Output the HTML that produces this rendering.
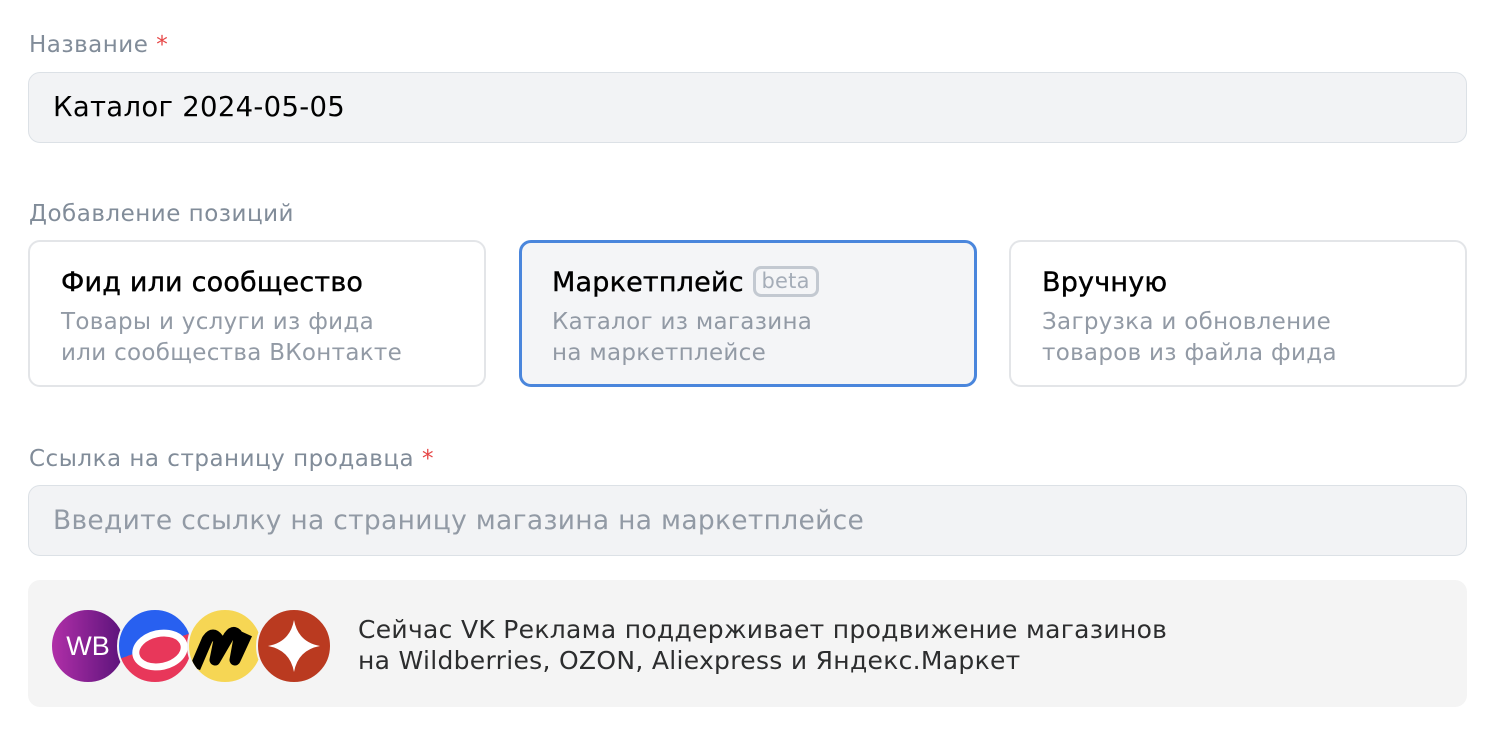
<!DOCTYPE html><html><head><meta charset="utf-8"><style>
body{margin:0;width:1504px;height:742px;background:#fff;font-family:"DejaVu Sans",sans-serif;position:relative;overflow:hidden}
.a{position:absolute}
.lbl{font-size:23px;color:#818c99;letter-spacing:0.5px}
.lbl b{color:#e64646;font-weight:normal}
.inp{left:28px;width:1439px;height:71px;background:#f2f3f5;border:1px solid #dce1e6;border-radius:12px;box-sizing:border-box;line-height:69px;padding-left:24px;letter-spacing:0.3px}
.card{top:240px;width:458px;height:147px;border:2px solid #e3e5e8;border-radius:12px;box-sizing:border-box;padding:21px 0 0 31px}
.card .t{font-size:27px;color:#000;height:40px;line-height:40px;letter-spacing:0.2px;-webkit-text-stroke:0.4px #000}
.card .s{font-size:23px;color:#929aa5;line-height:31px;margin-top:4px;letter-spacing:0.3px}
.c{border-radius:50%;width:72px;height:72px;top:608px;position:absolute;border:2px solid #f4f4f4;box-sizing:content-box}
</style></head><body>
<div class="a lbl" style="left:29px;top:32px">Название <b>*</b></div>
<div class="a inp" style="top:72px;color:#000;font-size:27.5px">Каталог 2024-05-05</div>
<div class="a lbl" style="left:29px;top:201px">Добавление позиций</div>
<div class="a card" style="left:28px"><div class="t">Фид или сообщество</div><div class="s">Товары и услуги из фида<br>или сообщества ВКонтакте</div></div>
<div class="a card" style="left:519px;border:3px solid #4a86dc;background:#f4f5f7;padding:20px 0 0 30px"><div class="t">Маркетплейс <span style="display:inline-block;font-size:21px;color:#a5adb8;border:3px solid #c3c9d1;border-radius:8px;line-height:25px;padding:0 6px;vertical-align:3px;-webkit-text-stroke:0">beta</span></div><div class="s">Каталог из магазина<br>на маркетплейсе</div></div>
<div class="a card" style="left:1009px"><div class="t">Вручную</div><div class="s">Загрузка и обновление<br>товаров из файла фида</div></div>
<div class="a lbl" style="left:29px;top:446px">Ссылка на страницу продавца <b>*</b></div>
<div class="a inp" style="top:485px;color:#929aa5;font-size:26.5px">Введите ссылку на страницу магазина на маркетплейсе</div>
<div class="a" style="left:28px;top:580px;width:1439px;height:127px;background:#f4f4f4;border-radius:12px"></div>
<div class="c" style="left:50px;background:linear-gradient(90deg,#b02fa8,#5a137a);color:#fff;font-size:27px;line-height:72px;text-align:center;font-family:'Liberation Sans',sans-serif">WB</div>
<div class="c" style="left:117px;background:linear-gradient(160deg,#2860f0 50%,#e8375a 50%)"><div style="position:absolute;left:13px;top:20px;width:42px;height:26px;border:7px solid #fff;border-radius:50%;background:#e8375a;transform:rotate(-12deg)"></div></div>
<div class="c" style="left:187px;background:#f6d654;overflow:hidden"><svg width="72" height="72"><path d="M6 58 L18 30 Q24 20 30 30 L26 50 L40 26 Q46 18 50 28 L46 50 L58 24" fill="none" stroke="#000" stroke-width="11" stroke-linejoin="round"/></svg></div>
<div class="c" style="left:256px;background:#ba3a20"><svg width="72" height="72"><path d="M36 10 Q40 32 62 36 Q40 40 36 62 Q32 40 10 36 Q32 32 36 10Z" fill="#fff"/></svg></div>
<div class="a" style="left:358px;top:614px;font-size:25px;line-height:31px;color:#2c2d2e;letter-spacing:0.3px">Сейчас VK Реклама поддерживает продвижение магазинов<br>на Wildberries, OZON, Aliexpress и Яндекс.Маркет</div>
</body></html>
